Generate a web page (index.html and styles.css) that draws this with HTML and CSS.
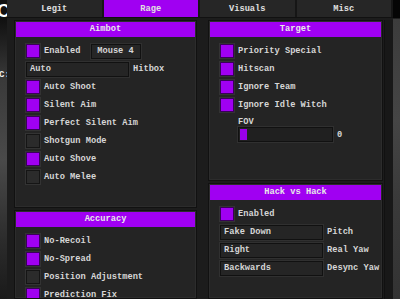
FILE: index.html
```html
<!DOCTYPE html>
<html lang="en">
<head>
    <meta charset="UTF-8">
    <title>Rage</title>
    <link rel="stylesheet" href="styles.css">
</head>
<body>
    <div class="scene-left">
        <span class="scene-c">C</span>
        <span class="scene-c2">C:</span>
    </div>

    <div class="window">
        <!-- Tabs -->
        <div class="tabs">
            <div class="tab">Legit</div>
            <div class="tab active">Rage</div>
            <div class="tab">Visuals</div>
            <div class="tab">Misc</div>
        </div>

        <div class="content">
            <div class="column col-left">
                <div class="panel aimbot">
                    <div class="panel-title">Aimbot</div>
                    <div class="row">
                        <span class="check on"></span><span class="label">Enabled</span>
                        <span class="key">Mouse 4</span>
                    </div>
                    <div class="row">
                        <span class="combo">Auto</span><span class="label">Hitbox</span>
                    </div>
                    <div class="row"><span class="check on"></span><span class="label">Auto Shoot</span></div>
                    <div class="row"><span class="check on"></span><span class="label">Silent Aim</span></div>
                    <div class="row"><span class="check on"></span><span class="label">Perfect Silent Aim</span></div>
                    <div class="row"><span class="check"></span><span class="label">Shotgun Mode</span></div>
                    <div class="row"><span class="check on"></span><span class="label">Auto Shove</span></div>
                    <div class="row"><span class="check"></span><span class="label">Auto Melee</span></div>
                </div>
                <div class="panel">
                    <div class="panel-title">Accuracy</div>
                    <div class="row"><span class="check on"></span><span class="label">No-Recoil</span></div>
                    <div class="row"><span class="check on"></span><span class="label">No-Spread</span></div>
                    <div class="row"><span class="check"></span><span class="label">Position Adjustment</span></div>
                    <div class="row"><span class="check on"></span><span class="label">Prediction Fix</span></div>
                </div>
            </div>

            <div class="column col-right">
                <div class="panel target">
                    <div class="panel-title">Target</div>
                    <div class="row"><span class="check on"></span><span class="label">Priority Special</span></div>
                    <div class="row"><span class="check on"></span><span class="label">Hitscan</span></div>
                    <div class="row"><span class="check on"></span><span class="label">Ignore Team</span></div>
                    <div class="row"><span class="check on"></span><span class="label">Ignore Idle Witch</span></div>
                    <div class="slider-block">
                        <div class="slider-label">FOV</div>
                        <div class="slider-row">
                            <div class="slider"><span class="grab"></span></div>
                            <span class="label">0</span>
                        </div>
                    </div>
                </div>
                <div class="panel">
                    <div class="panel-title">Hack vs Hack</div>
                    <div class="row"><span class="check on"></span><span class="label">Enabled</span></div>
                    <div class="row"><span class="combo">Fake Down</span><span class="label">Pitch</span></div>
                    <div class="row"><span class="combo">Right</span><span class="label">Real Yaw</span></div>
                    <div class="row"><span class="combo">Backwards</span><span class="label">Desync Yaw</span></div>
                </div>
            </div>
            <div class="scrollbar"></div>
        </div>
    </div>

    <div class="scene-right"></div>
</body>
</html>
```

FILE: styles.css
```css
body {
    margin: 0;
    width: 400px;
    height: 299px;
    overflow: hidden;
    display: flex;
    background: #202020;
    font-family: "Liberation Mono", "DejaVu Sans Mono", monospace;
    font-size: 8.7px;
    font-weight: bold;
    color: #d6d6d6;
}
.scene-left {
    flex: 0 0 7px;
    position: relative;
    overflow: hidden;
    background: linear-gradient(180deg, #111 0px, #111 20px, #3a3a3a 80px, #4a4a4a 160px, #2c2c2c 240px, #1a1a1a 299px);
}
.scene-c {
    position: absolute;
    left: -3px;
    top: 1px;
    font-family: "Liberation Sans", sans-serif;
    font-size: 18px;
    color: #fff;
}
.scene-c2 {
    position: absolute;
    left: -1px;
    top: 70px;
    font-size: 9px;
    color: #eee;
}
.scene-right {
    flex: 1;
    background: linear-gradient(180deg, #050505 0px, #050505 18px, #3c3c3c 19px, #454545 120px, #3a3a3a 200px, #333 299px);
}
.window {
    flex: 0 0 386px;
    display: flex;
    flex-direction: column;
    background: #1c1c1c;
}
.tabs {
    flex: 0 0 17px;
    display: flex;
    border-bottom: 1px solid #111;
}
.tab {
    flex: 1;
    display: flex;
    align-items: center;
    justify-content: center;
    background: #262626;
    border-right: 2px solid #161616;
    color: #e0e0e0;
}
.tab.active {
    background: #a000f2;
}
.content {
    flex: 1;
    min-height: 0;
    display: flex;
    padding: 2px 0 0 7px;
}
.column {
    display: flex;
    flex-direction: column;
    gap: 2px;
}
.col-left {
    flex: 0 0 183px;
    margin-right: 11px;
}
.col-right {
    flex: 0 0 175px;
    margin-right: 1px;
}
.scrollbar {
    flex: 0 0 8px;
    background: #181818;
    border-left: 1px solid #111;
}
.panel {
    flex: 1;
    min-height: 0;
    overflow: hidden;
    background: #242424;
    border: 1px solid #111;
    box-shadow: inset 0 0 0 1px #2c2c2c;
    padding: 1px 1px 0 1px;
}
.aimbot {
    flex: 0 0 188px;
    box-sizing: border-box;
}
.target {
    flex: 0 0 161px;
    box-sizing: border-box;
}
.panel-title {
    height: 15px;
    line-height: 15px;
    text-align: center;
    background: #a000f2;
    color: #e8e8e8;
    margin-bottom: 5px;
}
.row {
    display: flex;
    align-items: center;
    height: 18px;
    padding-left: 10px;
}
.check {
    width: 12px;
    height: 12px;
    background: #2b2b2b;
    border: 1px solid #151515;
    box-shadow: 0 0 0 1px #333;
    margin-right: 4px;
}
.check.on {
    background: #a000f2;
    border-color: #3a005a;
}
.label {
    white-space: nowrap;
}
.key {
    margin-left: 10px;
    width: 48px;
    height: 13px;
    line-height: 13px;
    text-align: center;
    background: #262626;
    border: 1px solid #111;
    box-shadow: 0 0 0 1px #2f2f2f;
}
.combo {
    width: 98px;
    height: 13px;
    line-height: 13px;
    padding-left: 3px;
    background: #252525;
    border: 1px solid #111;
    box-shadow: 0 0 0 1px #303030;
    margin-right: 4px;
}
.slider-block {
    padding: 4px 0 0 28px;
}
.slider-label {
    height: 9px;
    line-height: 9px;
}
.slider-row {
    display: flex;
    align-items: center;
    gap: 4px;
}
.slider {
    width: 92px;
    height: 13px;
    background: #202020;
    border: 1px solid #111;
    box-shadow: 0 0 0 1px #303030;
    display: flex;
    align-items: center;
    padding-left: 1px;
}
.grab {
    width: 7px;
    height: 11px;
    background: #9a00e8;
}
```
